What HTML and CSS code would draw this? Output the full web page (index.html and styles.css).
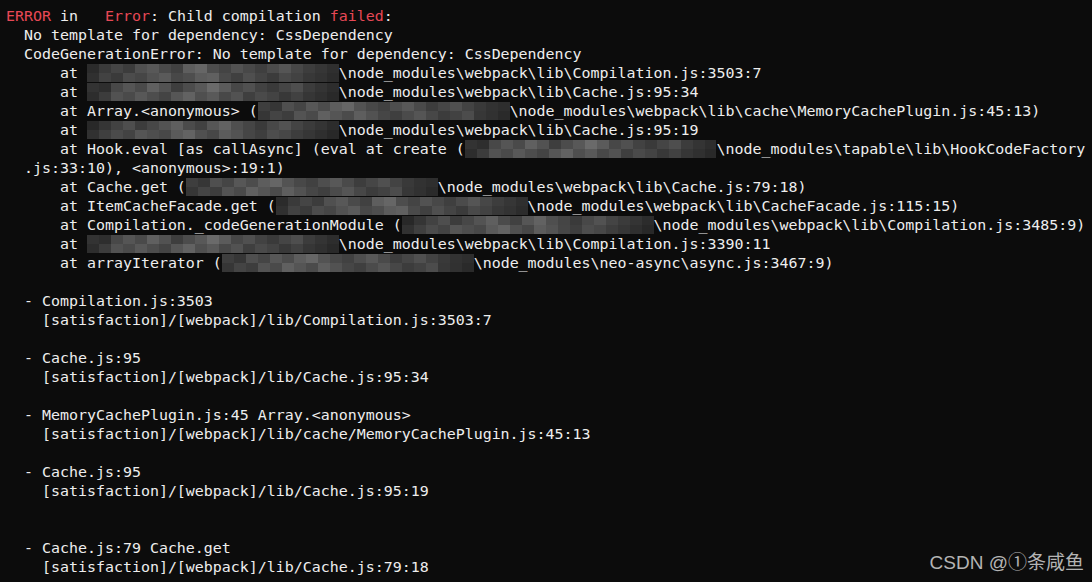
FILE: index.html
```html
<!DOCTYPE html>
<html lang="en">
<head>
<meta charset="utf-8">
<title>Terminal</title>
<link rel="stylesheet" href="styles.css">
</head>
<body>
<main class="term">
<pre class="out"><span class="red">ERROR</span> in   <span class="red">Error</span>: Child compilation <span class="red">failed</span>:
  No template for dependency: CssDependency
  CodeGenerationError: No template for dependency: CssDependency
      at <span class="m m1">                            </span>\node_modules\webpack\lib\Compilation.js:3503:7
      at <span class="m m2">                            </span>\node_modules\webpack\lib\Cache.js:95:34
      at Array.&lt;anonymous&gt; (<span class="m m3">                            </span>\node_modules\webpack\lib\cache\MemoryCachePlugin.js:45:13)
      at <span class="m m4">                            </span>\node_modules\webpack\lib\Cache.js:95:19
      at Hook.eval [as callAsync] (eval at create (<span class="m m2">                            </span>\node_modules\tapable\lib\HookCodeFactory
  .js:33:10), &lt;anonymous&gt;:19:1)
      at Cache.get (<span class="m m3">                            </span>\node_modules\webpack\lib\Cache.js:79:18)
      at ItemCacheFacade.get (<span class="m m1">                            </span>\node_modules\webpack\lib\CacheFacade.js:115:15)
      at Compilation._codeGenerationModule (<span class="m m4">                            </span>\node_modules\webpack\lib\Compilation.js:3485:9)
      at <span class="m m2">                            </span>\node_modules\webpack\lib\Compilation.js:3390:11
      at arrayIterator (<span class="m m3">                            </span>\node_modules\neo-async\async.js:3467:9)

  - Compilation.js:3503
    [satisfaction]/[webpack]/lib/Compilation.js:3503:7

  - Cache.js:95
    [satisfaction]/[webpack]/lib/Cache.js:95:34

  - MemoryCachePlugin.js:45 Array.&lt;anonymous&gt;
    [satisfaction]/[webpack]/lib/cache/MemoryCachePlugin.js:45:13

  - Cache.js:95
    [satisfaction]/[webpack]/lib/Cache.js:95:19


  - Cache.js:79 Cache.get
    [satisfaction]/[webpack]/lib/Cache.js:79:18</pre>
<div class="watermark">CSDN @①条咸鱼</div>
</main>
</body>
</html>
```
FILE: styles.css
```css
html, body {
  margin: 0;
  padding: 0;
  background: #0c0c0c;
  width: 1092px;
  height: 582px;
  overflow: hidden;
}

.term {
  position: relative;
  width: 1092px;
  height: 582px;
  box-sizing: border-box;
  padding: 7px 0 0 6px;
}

.out {
  margin: 0;
  font-family: "DejaVu Sans Mono", "Liberation Mono", monospace;
  font-size: 14.95px;
  line-height: 19px;
  color: #eeeeee;
  white-space: pre;
}

.red {
  color: #e74856;
}

.m {
  background-repeat: no-repeat;
  background-size: 100% 50%, 100% 50%;
  background-position: left top, left bottom;
}

.m1 {
  background-image:
    linear-gradient(90deg, #2b2b2b 0 12px, #3a3a3a 12px 24px, #454545 24px 36px, #3c3c3c 36px 48px, #505050 48px 60px, #585858 60px 72px, #4a4a4a 72px 84px, #414141 84px 96px, #5e5e5e 96px 108px, #666666 108px 120px, #4d4d4d 120px 132px, #444444 132px 144px, #525252 144px 156px, #484848 156px 168px, #3f3f3f 168px 180px, #4b4b4b 180px 192px, #555555 192px 204px, #474747 204px 216px, #3d3d3d 216px 228px, #363636 228px 240px, #2f2f2f 240px 252px),
    linear-gradient(90deg, #303030 0 12px, #424242 12px 24px, #3a3a3a 24px 36px, #4c4c4c 36px 48px, #464646 48px 60px, #525252 60px 72px, #5a5a5a 72px 84px, #484848 84px 96px, #4e4e4e 96px 108px, #5c5c5c 108px 120px, #606060 120px 132px, #4a4a4a 132px 144px, #404040 144px 156px, #4f4f4f 156px 168px, #444444 168px 180px, #3b3b3b 180px 192px, #494949 192px 204px, #424242 204px 216px, #383838 216px 228px, #333333 228px 240px, #2c2c2c 240px 252px);
}

.m2 {
  background-image:
    linear-gradient(90deg, #333333 0 12px, #2e2e2e 12px 24px, #484848 24px 36px, #555555 36px 48px, #4a4a4a 48px 60px, #606060 60px 72px, #525252 72px 84px, #3e3e3e 84px 96px, #4c4c4c 96px 108px, #585858 108px 120px, #6a6a6a 120px 132px, #5b5b5b 132px 144px, #474747 144px 156px, #505050 156px 168px, #424242 168px 180px, #3a3a3a 180px 192px, #454545 192px 204px, #4e4e4e 204px 216px, #3c3c3c 216px 228px, #343434 228px 240px, #2d2d2d 240px 252px),
    linear-gradient(90deg, #2d2d2d 0 12px, #3c3c3c 12px 24px, #525252 24px 36px, #4a4a4a 36px 48px, #585858 48px 60px, #4d4d4d 60px 72px, #444444 72px 84px, #565656 84px 96px, #626262 96px 108px, #4f4f4f 108px 120px, #595959 120px 132px, #484848 132px 144px, #525252 144px 156px, #3f3f3f 156px 168px, #4a4a4a 168px 180px, #434343 180px 192px, #383838 192px 204px, #414141 204px 216px, #363636 216px 228px, #303030 228px 240px, #292929 240px 252px);
}

.m3 {
  background-image:
    linear-gradient(90deg, #3e3e3e 0 12px, #363636 12px 24px, #4f4f4f 24px 36px, #454545 36px 48px, #575757 48px 60px, #4c4c4c 60px 72px, #5d5d5d 72px 84px, #666666 84px 96px, #535353 96px 108px, #484848 108px 120px, #414141 120px 132px, #4e4e4e 132px 144px, #585858 144px 156px, #4a4a4a 156px 168px, #3d3d3d 168px 180px, #464646 180px 192px, #505050 192px 204px, #434343 204px 216px, #393939 216px 228px, #323232 228px 240px, #2e2e2e 240px 252px),
    linear-gradient(90deg, #363636 0 12px, #444444 12px 24px, #3d3d3d 24px 36px, #535353 36px 48px, #4a4a4a 48px 60px, #606060 60px 72px, #555555 72px 84px, #4b4b4b 84px 96px, #5e5e5e 96px 108px, #525252 108px 120px, #464646 120px 132px, #3f3f3f 132px 144px, #4b4b4b 144px 156px, #555555 156px 168px, #474747 168px 180px, #3c3c3c 180px 192px, #424242 192px 204px, #4c4c4c 204px 216px, #373737 216px 228px, #313131 228px 240px, #2a2a2a 240px 252px);
}

.m4 {
  background-image:
    linear-gradient(90deg, #282828 0 12px, #353535 12px 24px, #424242 24px 36px, #4e4e4e 36px 48px, #3c3c3c 48px 60px, #474747 60px 72px, #535353 72px 84px, #5f5f5f 84px 96px, #4b4b4b 96px 108px, #414141 108px 120px, #565656 120px 132px, #626262 132px 144px, #4f4f4f 144px 156px, #454545 156px 168px, #3a3a3a 168px 180px, #484848 180px 192px, #525252 192px 204px, #444444 204px 216px, #3b3b3b 216px 228px, #343434 228px 240px, #2c2c2c 240px 252px),
    linear-gradient(90deg, #313131 0 12px, #3f3f3f 12px 24px, #4b4b4b 24px 36px, #434343 36px 48px, #555555 48px 60px, #4e4e4e 60px 72px, #484848 72px 84px, #5a5a5a 84px 96px, #636363 96px 108px, #505050 108px 120px, #474747 120px 132px, #5c5c5c 132px 144px, #535353 144px 156px, #464646 156px 168px, #3e3e3e 168px 180px, #4d4d4d 180px 192px, #474747 192px 204px, #3d3d3d 204px 216px, #363636 216px 228px, #2f2f2f 228px 240px, #282828 240px 252px);
}

.watermark {
  position: absolute;
  right: 8px;
  bottom: 7px;
  font-family: "Liberation Sans", "Noto Sans CJK SC", sans-serif;
  font-size: 19px;
  line-height: 24px;
  color: #b4b4b4;
}
```
